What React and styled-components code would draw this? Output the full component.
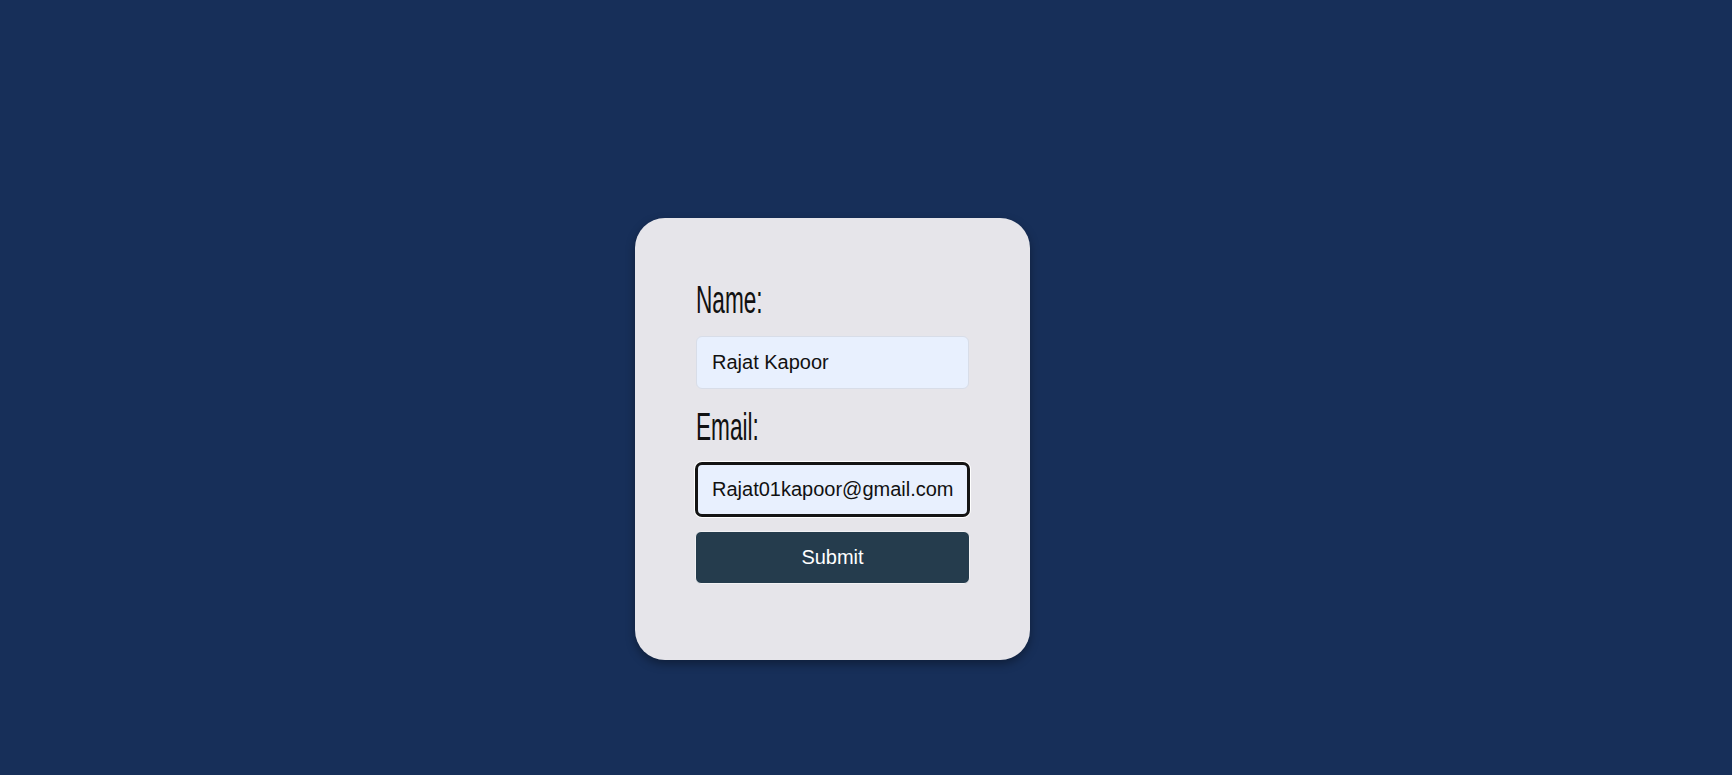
import React, { useState } from 'react';
import styled, { createGlobalStyle } from 'styled-components';

const GlobalStyle = createGlobalStyle`
  html, body {
    margin: 0;
    padding: 0;
    background-color: #172f59;
    font-family: "Liberation Sans", Arial, sans-serif;
  }
`;

const Page = styled.div`
  min-height: 775px;
  padding: 218px 0 0 635px;
  box-sizing: border-box;
`;

const Card = styled.form`
  width: 395px;
  height: 442px;
  box-sizing: border-box;
  padding: 62px 61px 0 61px;
  background-color: #e6e5ea;
  border-radius: 30px;
  box-shadow: 0 4px 10px rgba(0, 0, 0, 0.35);
  display: flex;
  flex-direction: column;
`;

const Label = styled.label`
  display: block;
  height: 38px;
  font-size: 39px;
  line-height: 1;
  color: #111;
  margin-bottom: 18px;

  span {
    display: inline-block;
    transform: scaleX(0.58);
    transform-origin: left center;
  }
`;

const Input = styled.input`
  width: 273px;
  height: 53px;
  box-sizing: border-box;
  padding: 0 15px;
  margin-bottom: ${(p) => p.$gap}px;
  border: 1px solid #d8dde8;
  border-radius: 6px;
  background-color: #e8f0fe;
  color: #111;
  caret-color: #111;
  font-family: "Liberation Sans", Arial, sans-serif;
  font-size: 20px;

  &:focus {
    outline: 3px solid #141414;
    outline-offset: -2px;
    box-shadow: 0 0 0 2px #ffffff;
  }
`;

const Button = styled.button`
  width: 275px;
  height: 53px;
  margin-left: -1px;
  border: 1px solid #f2f2f4;
  border-radius: 6px;
  background-color: #253c4d;
  color: #fff;
  font-family: "Liberation Sans", Arial, sans-serif;
  font-size: 20px;
  cursor: pointer;
`;

export default function App() {
  const [name, setName] = useState('Rajat Kapoor');
  const [email, setEmail] = useState('Rajat01kapoor@gmail.com');

  return (
    <>
      <GlobalStyle />
      <Page>
        <Card onSubmit={(e) => e.preventDefault()}>
          <Label htmlFor="name"><span>Name:</span></Label>
          <Input id="name" $gap={18} value={name} onChange={(e) => setName(e.target.value)} />
          <Label htmlFor="email"><span>Email:</span></Label>
          <Input id="email" $gap={15} autoFocus value={email} onChange={(e) => setEmail(e.target.value)} />
          <Button type="submit">Submit</Button>
        </Card>
      </Page>
    </>
  );
}
